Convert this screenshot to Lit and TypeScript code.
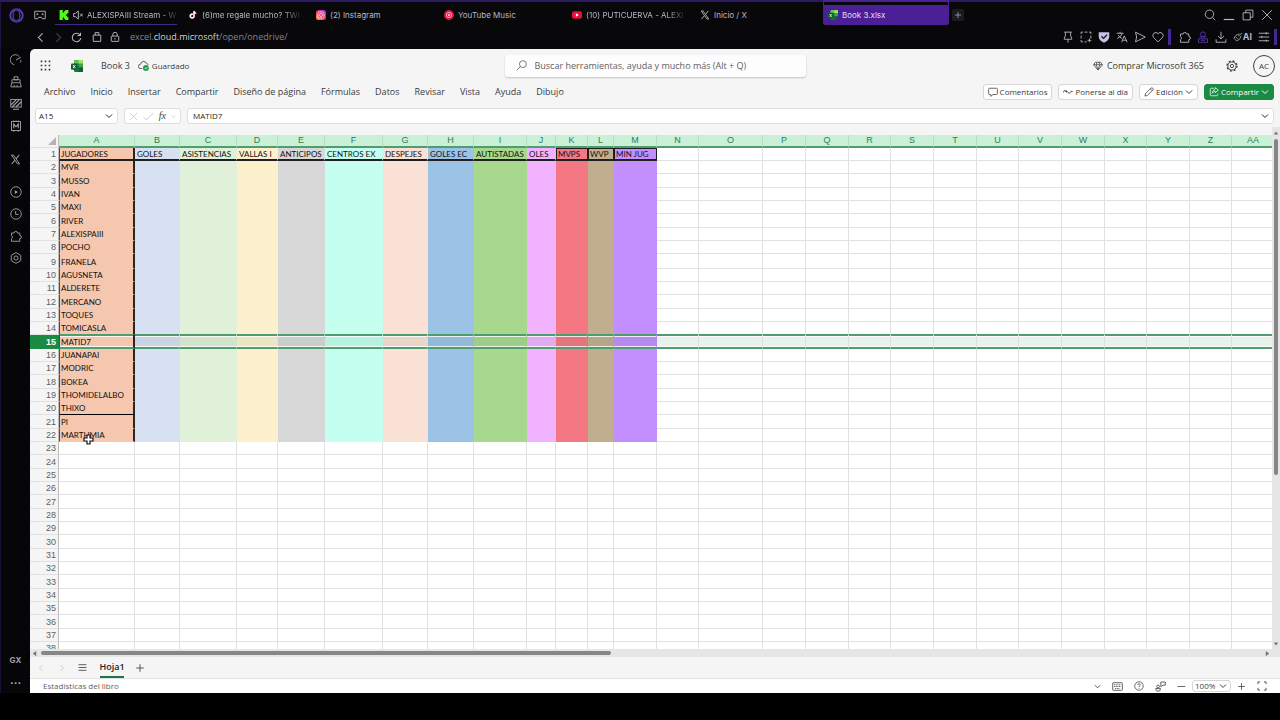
import { LitElement, html, css, svg, nothing } from "lit";
import { customElement, property } from "lit/decorators.js";
import { classMap } from "lit/directives/class-map.js";
import { styleMap } from "lit/directives/style-map.js";

/* Glyphs are drawn on a 16 x 16 canvas with a 1.2 stroke. */
const glyphs: Record<string, unknown> = {
  opera: svg`<g stroke="#5b3bb5" stroke-width="1.3"><circle cx="8" cy="8" r="7"/><ellipse cx="8" cy="8" rx="3.6" ry="5.6"/><path d="M6 2.2Q1.6 3.6 1.8 8.4Q2 12.4 6 13.8M10 2.2Q14.4 3.6 14.2 8.4Q14 12.4 10 13.8"/></g>`,
  workspace: svg`<path d="M1 3h14v10h-4l-1-2H6l-1 2H1z"/><path d="M4.5 6v2M11.500 6v2" stroke-width="2"/>`,
  mute: svg`<path d="M1 5.500v5h3l4.500 4v-13l-4.500 4zM11 5.500l5 5M16 5.500l-5 5" stroke-width="1.500"/>`,
  kick: svg`<path fill="#53fc18" stroke="none" d="M1 0h5v4h2V2h2V0h5v5h-2v2h-2v2h2v2h2v5h-5v-2H8v-2H6v4H1z"/>`,
  tiktok: svg`<path stroke="#25f4ee" stroke-width="2.4" d="M7.4 6.5a3 3 0 1 0 2 3V1.5q.6 3 3.4 3.2"/><path stroke="#fe2c55" stroke-width="2" d="M8.4 7.5a3 3 0 1 0 1.6 3V2.5q.6 3 3.4 3.2"/><path stroke="#fff" stroke-width="2" d="M7.9 7a3 3 0 1 0 1.8 3V2q.6 3 3.4 3.2"/>`,
  instagram: svg`<defs><linearGradient id="ig" x1="0" y1="1" x2="1" y2="0"><stop offset="0" stop-color="#ffb52e"/><stop offset=".45" stop-color="#f5285a"/><stop offset="1" stop-color="#8c2fe0"/></linearGradient></defs><rect width="16" height="16" rx="4" fill="url(#ig)" stroke="none"/><g stroke="#fff"><rect x="3" y="3" width="10" height="10" rx="3"/><circle cx="8" cy="8" r="2.4"/><path d="M11 4.9v.2"/></g>`,
  ytmusic: svg`<circle cx="8" cy="8" r="8" fill="#e6103c" stroke="none"/><circle cx="8" cy="8" r="4.2" stroke="#fff" stroke-width="1"/><path d="M6.8 5.8v4.4L10.4 8z" fill="#fff" stroke="none"/>`,
  youtube: svg`<rect y="2" width="16" height="12" rx="3.4" fill="#e6103c" stroke="none"/><path d="M6.2 5.2v5.6L11 8z" fill="#fff" stroke="none"/>`,
  x: svg`<path d="M2 1.6h3L14 14.4h-3z" stroke-width="1.4"/><path d="M13.5 1.5L8.9 6.8M6.9 9.2L2.4 14.5" stroke-width="1.5"/>`,
  excel: svg`<g stroke="none"><rect x="4" y="0" width="12" height="16" rx="1.6" fill="#107c41"/><path d="M5.5 0H10v5H4V1.5Q4 0 5.5 0z" fill="#5bc74a"/><path d="M10 0h4.5Q16 0 16 1.5V5h-6z" fill="#a6e06a"/><path d="M10 5h6v5h-6z" fill="#3aa648"/><path d="M4 5h6v5H4z" fill="#188044"/><path d="M10 10h6v4.5Q16 16 14.5 16H10z" fill="#185c37"/><rect x="0" y="4.5" width="8.5" height="8.5" rx="1.4" fill="#0e5c30"/></g><path d="M2.6 6.6l3.3 4.4M5.9 6.6l-3.3 4.4" stroke="#fff"/>`,
  plus: svg`<path d="M8 2v12M2 8h12" stroke-width="1.4"/>`,
  minus: svg`<path d="M1 8h14" stroke-width="1.4"/>`,
  search: svg`<circle cx="7.3" cy="7" r="5.6"/><path d="M11.3 11l3.6 4"/>`,
  find: svg`<circle cx="10" cy="6" r="5"/><path d="M6.3 9.7L1 15"/>`,
  minimize: svg`<path d="M1 14h14" stroke-width="1.6"/>`,
  restore: svg`<path d="M1.5 5h9.5v9.5H1.5zM5 5V1.5h9.5V11H11"/>`,
  close: svg`<path d="M1.5 1.5l13 13M14.5 1.5l-13 13"/>`,
  left: svg`<path d="M11 2L5 8l6 6" stroke-width="1.5"/>`,
  right: svg`<path d="M5 2l6 6-6 6" stroke-width="1.5"/>`,
  down: svg`<path d="M2 5l6 6 6-6" stroke-width="2"/>`,
  reload: svg`<path d="M13 4.2A6.2 6.2 0 1 0 14.2 9M13.8 1v4.2H9.5" stroke-width="1.5"/>`,
  bag: svg`<path d="M2 5h12v10H2zM5 5V1h6v4" stroke-width="1.5"/>`,
  lock: svg`<rect x="2" y="6.5" width="12" height="8.5" rx="1" stroke-width="1.5"/><path d="M4.5 6.5V4a3.5 3.5 0 0 1 7 0v2.5M8 9.5v2.5" stroke-width="1.5"/>`,
  pin: svg`<path d="M3 1.5h10M4.5 1.5v5L3 9.5v1.5h10V9.5l-1.5-3v-5M8 11v4.5"/>`,
  snapshot: svg`<path d="M1.5 4V1.5H4M6 1.5h4M12 1.5h2.5V4M14.5 6v4M1.5 6v4M1.5 12v2.5H4M6 14.5h3M12.5 10v5M10 12.5h5"/>`,
  shield: svg`<path d="M1 1.5h14V8q-.5 5-7 7.5Q1.5 13 1 8z" fill="#c9c0e6" stroke="none"/><path d="M4.5 7l3 3 4.5-5" stroke="#15121f" stroke-width="1.6"/>`,
  translate: svg`<path d="M1 3h9M5.5 1v2M8.5 3Q7 8 1.5 10M3 5.5q2 3 5 4.5M7.5 15L11 6.5l3.8 8.5M8.8 12.3h5"/>`,
  send: svg`<path d="M2 1.5L15 8 2 14.5 3.5 8z"/>`,
  heart: svg`<path d="M8 14.5L2 8.5a3.8 3.8 0 0 1 6-5 3.8 3.8 0 0 1 6 5z"/>`,
  puzzle: svg`<path d="M2 4h3.5a2.2 2.2 0 0 1 4.4 0H13v3.2a2.2 2.2 0 0 1 0 4.4V15H2v-3.5a2.2 2.2 0 0 0 0-4z"/>`,
  person: svg`<g stroke="#5b34b8"><circle cx="8" cy="4.5" r="3.3"/><path d="M3.5 8h9M2 10.5h12V15H2zM5.5 12.5h5"/></g>`,
  download: svg`<path d="M8 1v9.5M4 6.8l4 3.9 4-3.9M1.5 11v4h13v-4"/>`,
  brush: svg`<path d="M14.5 1.5L8 7M10.5 3L5 5 1.5 10 6 14.5 11 11l2-5M4 7.5L8.5 12"/>`,
  sliders: svg`<path d="M1 3h14M1 8h14M1 13h14M11 1.5v3M5 6.5v3M11 11.5v3"/>`,
  gauge: svg`<path d="M12.5 3.6A6.8 6.8 0 1 0 5.5 14.3M8 8l6.5-3.5M14.7 8a6.6 6.6 0 0 1-1 3.5"/>`,
  cleaner: svg`<path d="M5.5 1h5v4h-5zM2.5 5h11v4h-11zM2.5 9L1 14.5h14L13.5 9M5.5 14.5V12M9.5 14.5V12"/>`,
  wallpaper: svg`<rect x="1" y="2" width="14" height="10"/><path d="M1.5 9L8 2.5M3 12L12 2.5M8 12l7-7M4 15h8" stroke-width="1.5"/>`,
  mods: svg`<rect x="2" y="2" width="12" height="12"/><path d="M5 11V5.5l3 3.5 3-3.5V11M5 .5v1M8 .5v1M11 .5v1M5 15v1M11 15v1" stroke-width="1.5"/>`,
  play: svg`<circle cx="8" cy="8" r="7"/><path d="M6.5 5.5v5L10.5 8z" fill="currentColor" stroke="none"/>`,
  clock: svg`<circle cx="8" cy="8" r="7"/><path d="M7.5 4v4.5h4"/>`,
  settings: svg`<path d="M8 .8L14.3 4.4v7.2L8 15.2 1.7 11.6V4.4z"/><circle cx="8" cy="8" r="2.8"/>`,
  gear: svg`<circle cx="8" cy="8" r="2.2"/><circle cx="8" cy="8" r="5.4"/><circle cx="8" cy="8" r="6.7" stroke-width="1.7" stroke-dasharray="2.6 2.66"/>`,
  dots: svg`<path d="M1.5 9h2.5M7 9h2.5M12.5 9H15" stroke-width="2.5"/>`,
  waffle: svg`<path d="M1 2h2.4M6.8 2h2.4M12.6 2H15M1 8h2.4M6.8 8h2.4M12.6 8H15M1 14h2.4M6.8 14h2.4M12.6 14H15" stroke-width="2.4"/>`,
  cloud: svg`<path d="M6 12.5H4a3.2 3.2 0 0 1-.3-6.4A4.6 4.6 0 0 1 12.5 5a3 3 0 0 1 2.3 2"/><circle cx="11.5" cy="11.5" r="4.3" fill="#1f9d4d" stroke="none"/><path d="M9.5 11.5l1.5 1.5 2.5-2.8" stroke="#fff"/>`,
  diamond: svg`<path d="M4 2h8l3.2 4L8 14.5.8 6zM.8 6h14.4M5 6l3 8 3-8M5 6l1.5-4M11 6L9.5 2"/>`,
  comment: svg`<path d="M2.5 2h11Q15 2 15 3.5v7q0 1.5-1.5 1.5H8l-3.5 3V12h-2Q1 12 1 10.5v-7Q1 2 2.5 2z"/>`,
  catchup: svg`<path d="M0 9l2.5-3.5L6 7.5M7 7.5l3 3L13 7h2.5" stroke-width="1.5"/><circle cx="5.5" cy="7" r="1" fill="currentColor"/>`,
  pencil: svg`<path d="M1.5 14.5l1-4L11.5 1.5q1.5-.8 2.5.5t.5 2.5L5.5 13.5zM10 3l3 3"/>`,
  share: svg`<path d="M8 2H4Q2 2 2 4v8q0 2 2 2h8q2 0 2-2v-1.5M10 1l5 4-5 4V7Q7 7 5 10q.5-5 5-6.5z"/>`,
  check: svg`<path d="M1 9l4 4L15 3"/>`,
  lines: svg`<path d="M1 3h14M1 8h14M1 13h14" stroke-width="1.5"/>`,
  keyboard: svg`<rect x="1" y="2.5" width="14" height="11" rx="1"/><path d="M3 5.5h10M3 8h10M4.5 11h7" stroke-dasharray="1.6 .8"/>`,
  help: svg`<circle cx="8" cy="8" r="6.8"/><path d="M6 6.3a2 2 0 1 1 2.8 1.8Q8 8.5 8 9.8M8 11.3v.9"/>`,
  feedback: svg`<circle cx="4.5" cy="8" r="2"/><path d="M1 11h7q0 4-3.5 4T1 11zM8.5 1.5H15V6h-3.5l-3 2.5z"/>`,
  expand: svg`<path d="M1.5 5V1.5H5M11 1.5h3.5V5M14.5 11v3.5H11M5 14.5H1.5V11" stroke-width="1.4"/>`,
  triLeft: svg`<path d="M12 2v12L4 8z" fill="currentColor" stroke="none"/>`,
  triRight: svg`<path d="M4 2v12l8-6z" fill="currentColor" stroke="none"/>`,
  triUp: svg`<path d="M2 12h12L8 4z" fill="currentColor" stroke="none"/>`,
  triDown: svg`<path d="M2 4h12l-6 8z" fill="currentColor" stroke="none"/>`,
};

const icon = (name: string, size = 12) => html`<svg
  class="icon" width=${size} height=${size} viewBox="0 0 16 16" fill="none"
  stroke="currentColor" stroke-width="1.2" aria-hidden="true">${glyphs[name]}</svg>`;

const base = css`
  :host, * { box-sizing: border-box; }
  .icon { display: block; flex: none; }
  button { font: inherit; color: inherit; background: none; border: 0; padding: 0; margin: 0;
    display: flex; align-items: center; justify-content: center; flex: none; white-space: nowrap; }
  a { color: inherit; text-decoration: none; }
`;

@customElement("browser-bar")
class BrowserBar extends LitElement {
  static styles = [base, css`
    :host { display: block; height: 49px; background: #08080a; border-top: 2px solid #2c1b62;
      border-left: 1px solid #1d1440; color: #b9b7c0; font: 8px/14px Inter, sans-serif; }
    .tabs { display: flex; height: 26px; align-items: center; }
    .logo { width: 31px; }
    .work { width: 16px; margin-right: 7px; }
    .tab { display: flex; align-items: center; gap: 4px; width: 128px; height: 20px; padding: 0 5px; }
    .text { white-space: nowrap; }
    .fade .text { mask-image: linear-gradient(90deg, #000 82%, transparent 104%); }
    .muted { border-bottom: 1px solid #3c2b86; width: 122px; margin-right: 6px; padding: 0 0 0 4px; }
    .active { background: #4b1f95; width: 126px; border-radius: 2px; color: #e6def5;
      box-shadow: 0 -4px 0 -1px #08080a, 0 -6px 0 #4b1f95; }
    .new { background: #1c1b20; width: 12px; height: 12px; border-radius: 2px; margin-left: 3px; }
    .window { margin-left: auto; display: flex; gap: 7px; padding-right: 7px; }
    .bar { display: flex; height: 18px; align-items: center; }
    .nav { display: flex; gap: 6px; padding-left: 33px; width: 129px; }
    .nav button { width: 12px; }
    .nav .gap { margin-left: 3px; }
    .dim { color: #4b4956; }
    .url { color: #85819a; font: 9px/14px "Open Sans", sans-serif; }
    .url b { font-weight: 400; color: #d2cfdb; }
    .tools { margin-left: auto; display: flex; align-items: center; gap: 6px; padding-right: 3px; }
    .mark { width: 3px; height: 16px; background: #43289a; margin-left: -2px; }
    .mark.mid { margin-right: 2px; }
    .ai { font-weight: 700; font-size: 9px; }
  `];
  tabs = [
    ["kick", "ALEXISPAIII Stream - W"], ["tiktok", "(6)me regale mucho? TWI"], ["instagram", "(2) Instagram"],
    ["ytmusic", "YouTube Music"], ["youtube", "(10) PUTICUERVA - ALEXI"], ["x", "Inicio / X"], ["excel", "Book 3.xlsx"],
  ];
  render() {
    return html`
      <div class="tabs" role="tablist">
        <button class="logo" aria-label="Menú">${icon("opera", 15)}</button>
        <button class="work" aria-label="Espacio">${icon("workspace", 12)}</button>
        ${this.tabs.map(([ic, t], i) => html`<a href="#" role="tab" class=${classMap({ tab: true, muted: i === 0, active: i === 6, fade: t.length > 20 })}>
          ${icon(ic, 10)}${i === 0 ? icon("mute", 10) : nothing}<span class="text">${t}</span></a>`)}
        <button class="new" aria-label="Nueva pestaña">${icon("plus", 8)}</button>
        <div class="window">${["search", "minimize", "restore", "close"].map((n) => html`<button aria-label=${n}>${icon(n, 12)}</button>`)}</div>
      </div>
      <div class="bar">
        <div class="nav">
          <button aria-label="Atrás">${icon("left", 11)}</button>
          <button class="dim" aria-label="Adelante">${icon("right", 11)}</button>
          <button aria-label="Recargar">${icon("reload", 11)}</button>
          <button class="gap" aria-label="Ofertas">${icon("bag", 10)}</button>
          <button aria-label="Seguridad">${icon("lock", 10)}</button>
        </div>
        <a class="url" href="#">excel.<b>cloud.microsoft</b>/open/onedrive/</a>
        <div class="tools">
          ${["pin", "snapshot", "shield", "translate", "send", "heart"].map((n) => html`<button aria-label=${n}>${icon(n, 12)}</button>`)}
          <span class="mark mid"></span>
          ${["puzzle", "person", "download"].map((n) => html`<button aria-label=${n}>${icon(n, 12)}</button>`)}
          <button class="ai" aria-label="AI">${icon("brush", 10)}AI</button>
          <button aria-label="Configuración">${icon("sliders", 12)}</button>
          <span class="mark"></span>
        </div>
      </div>`;
  }
}

@customElement("side-rail")
class SideRail extends LitElement {
  static styles = [base, css`
    :host { display: flex; flex-direction: column; width: 30px; flex: none; align-items: center; color: #a3a1aa;
      background: #060608; border-left: 1px solid #171033; }
    button { width: 22px; height: 22px; }
    .space { margin-top: 11px; }
    .end { margin-top: auto; font: 700 8px/12px Inter, sans-serif; }
  `];
  render() {
    return html`
      ${["gauge", "cleaner", "wallpaper", "mods"].map((n) => html`<button aria-label=${n}>${icon(n, 12)}</button>`)}
      <button class="space" aria-label="X">${icon("x", 11)}</button>
      <button class="space" aria-label="Reproductor">${icon("play", 12)}</button>
      ${["clock", "puzzle", "settings"].map((n) => html`<button aria-label=${n}>${icon(n, 12)}</button>`)}
      <button class="end">GX</button>
      <button aria-label="Más">${icon("dots", 11)}</button>`;
  }
}

@customElement("excel-header")
class ExcelHeader extends LitElement {
  static styles = [base, css`
    :host { display: block; background: #f5f5f5; color: #3b3a39; font: 9px/14px "Open Sans", sans-serif;
      border-radius: 5px 0 0 0; }
    .title { display: grid; grid-template-columns: 1fr 301px 1fr; height: 33px; align-items: center; }
    .doc { display: flex; align-items: center; padding-left: 10px; }
    .apps { margin-right: 20px; }
    .name { margin: 0 8px 0 18px; }
    .saved { font-size: 8px; gap: 3px; }
    .search { display: flex; align-items: center; gap: 8px; height: 22px; padding: 0 11px; background: #fdfdfd;
      border-radius: 3px; box-shadow: 0 1px 2px #0003; color: #616161; }
    input { font: inherit; color: inherit; border: 0; outline: 0; background: none; padding: 0; min-width: 0; flex: 1; }
    .search input::placeholder { color: #616161; opacity: 1; }
    .account { display: flex; align-items: center; justify-content: flex-end; padding-right: 5px; }
    .buy { gap: 4px; margin-right: 22px; }
    .avatar { width: 22px; height: 22px; border: 1px solid #424242; border-radius: 50%; margin-left: 15px; font-size: 8px; }
    .menu { display: flex; align-items: center; height: 20px; padding: 0 6px 0 14px; }
    nav { display: flex; gap: 15px; }
    .actions { margin-left: auto; display: flex; gap: 6px; font-size: 8px; }
    .action { height: 16px; padding: 0 4px; gap: 2px; background: #fff; border: 1px solid #d6d6d6; border-radius: 3px; }
    .primary { background: #1b8a43; border-color: #1b8a43; color: #fff; }
    .formula { display: flex; gap: 6px; padding: 6px 6px 3px 5px; color: #242424; }
    .box { display: flex; align-items: center; height: 16px; background: #fff; border: 1px solid #dedede; border-radius: 3px; font-size: 8px; padding: 0 4px; }
    .ref { width: 83px; padding-left: 3px; }
    .fx { width: 57px; justify-content: space-between; color: #bdbdbd; }
    .fx i { color: #424242; font-family: "Liberation Serif", serif; font-size: 10px; }
    .value { flex: 1; padding-left: 5px; }
  `];
  render() {
    return html`
      <div class="title">
        <div class="doc">
          <button class="apps" aria-label="Aplicaciones">${icon("waffle", 11)}</button>
          ${icon("excel", 12)}<span class="name">Book 3</span>
          <button class="saved">${icon("cloud", 11)}Guardado</button>
        </div>
        <label class="search">${icon("find", 11)}<input aria-label="Buscar" placeholder="Buscar herramientas, ayuda y mucho más (Alt + Q)"></label>
        <div class="account">
          <button class="buy">${icon("diamond", 10)}Comprar Microsoft 365</button>
          <button aria-label="Configuración">${icon("gear", 12)}</button>
          <button class="avatar">AC</button>
        </div>
      </div>
      <div class="menu">
        <nav>${["Archivo", "Inicio", "Insertar", "Compartir", "Diseño de página", "Fórmulas", "Datos", "Revisar", "Vista", "Ayuda", "Dibujo"].map((m) => html`<button>${m}</button>`)}</nav>
        <div class="actions">
          <button class="action">${icon("comment", 10)}Comentarios</button>
          <button class="action">${icon("catchup", 10)}Ponerse al día</button>
          <button class="action">${icon("pencil", 10)}Edición${icon("down", 8)}</button>
          <button class="action primary">${icon("share", 10)}Compartir${icon("down", 8)}</button>
        </div>
      </div>
      <div class="formula">
        <div class="box ref"><input aria-label="Cuadro de nombres" .value=${"A15"}>${icon("down", 8)}</div>
        <div class="box fx">${icon("close", 9)}${icon("check", 11)}<i>fx</i>${icon("down", 5)}</div>
        <div class="box value"><input aria-label="Barra de fórmulas" .value=${"MATID7"}>${icon("down", 8)}</div>
      </div>`;
  }
}

interface Column { id: string; width: number; title?: string; fill?: string; boxed?: boolean }

const columns: Column[] = [
  { id: "A", width: 76, title: "JUGADORES", fill: "#f4c7ae" },
  { id: "B", width: 45, title: "GOLES", fill: "#d8e1f1" },
  { id: "C", width: 57, title: "ASISTENCIAS", fill: "#e1f1d9" },
  { id: "D", width: 41, title: "VALLAS I", fill: "#fdf1cd" },
  { id: "E", width: 47, title: "ANTICIPOS", fill: "#d8d8d8" },
  { id: "F", width: 58, title: "CENTROS EX", fill: "#c5fff0" },
  { id: "G", width: 45, title: "DESPEJES", fill: "#fae1d5" },
  { id: "H", width: 46, title: "GOLES EC", fill: "#9cc3e6" },
  { id: "I", width: 53, title: "AUTISTADAS", fill: "#a8d88e" },
  { id: "J", width: 29, title: "OLES", fill: "#f1b3ff" },
  { id: "K", width: 32, title: "MVPS", fill: "#f47784", boxed: true },
  { id: "L", width: 26, title: "WVP", fill: "#c1ae8f", boxed: true },
  { id: "M", width: 43, title: "MIN JUG", fill: "#c38fff", boxed: true },
  { id: "N", width: 42 }, { id: "O", width: 64 }, { id: "P", width: 43 }, { id: "Q", width: 43 },
  { id: "R", width: 42 }, { id: "S", width: 43 }, { id: "T", width: 43 }, { id: "U", width: 42 },
  { id: "V", width: 43 }, { id: "W", width: 43 }, { id: "X", width: 42 }, { id: "Y", width: 43 },
  { id: "Z", width: 42 }, { id: "AA", width: 43 },
];

const players = ["MVR", "MUSSO", "IVAN", "MAXI", "RIVER", "ALEXISPAIII", "POCHO", "FRANELA", "AGUSNETA", "ALDERETE",
  "MERCANO", "TOQUES", "TOMICASLA", "MATID7", "JUANAPAI", "MODRIC", "BOKEA", "THOMIDELALBO", "THIXO", "PI", "MARTHMIA"];

@customElement("sheet-grid")
class SheetGrid extends LitElement {
  @property({ type: Number }) selected = 15;
  static styles = [base, css`
    :host { display: grid; grid-template-columns: minmax(0, 1fr) 8px; grid-template-rows: minmax(0, 1fr) 8px;
      flex: 1; min-height: 0; background: #f5f5f5; }
    .pane { position: relative; overflow: hidden; background: #fff; margin-top: 8px; }
    table { border-collapse: separate; border-spacing: 0; table-layout: fixed; width: 0; }
    th, td { padding: 0; overflow: hidden; white-space: nowrap; }
    thead th { height: 13px; background: #caf0d8; color: #2f7d52; font: 9px/11px "Liberation Sans", sans-serif;
      border-right: 1px solid #b4dfc4; border-bottom: 2px solid #4f9d6e; }
    thead .corner { background: #f5f5f5; border-bottom: 1px solid #e1e1e1; border-right: 1px solid #bdbdbd; color: #b5b5b5; }
    .corner .icon { margin-left: auto; margin-right: 2px; }
    tbody tr { height: 13px; }
    tbody tr:nth-child(3n) { height: 14px; }
    tbody tr.tall { height: 15px; }
    tbody th { background: #f5f5f5; color: #616161; text-align: right; padding-right: 2px; vertical-align: bottom;
      font: 9px/11px "Liberation Sans", sans-serif; border-right: 1px solid #bdbdbd; border-bottom: 1px solid #e1e1e1; }
    td { border-right: 1px solid #e1e1e1; border-bottom: 1px solid #e1e1e1; vertical-align: bottom;
      font: 8px/11px Lato, sans-serif; color: #111; padding-left: 1px; }
    td.fill { border-color: transparent; }
    td.first { border-left: 1px solid #5a4a42; border-right: 2px solid #2a2422; }
    .titles td.fill { border-bottom: 2px solid #1f1f1f; padding-left: 2px; line-height: 10px; }
    .titles td.first { padding-left: 1px; }
    .titles td.boxed { border-right: 1px solid #1f1f1f; box-shadow: inset 1px 0 #1f1f1f, inset 0 1px #1f1f1f; }
    td.ruled { border-bottom: 1px solid #000; }
    .selected th { background: #1b8a43; color: #fff; font-weight: 700; border-color: #1b8a43; }
    tr:has(+ .selected) td { border-bottom-color: #4f9d6e; }
    .selected td { border-bottom: 2px solid #4f9d6e; box-shadow: inset 0 1px #4f9d6e, inset 0 2px #fffc, inset 0 -1px #fffc;
      background: #e8f2ec; line-height: 10px; }
    .scroll { background: #e6e6e6; display: flex; align-items: center; color: #757575; }
    .vertical { flex-direction: column; gap: 3px; padding: 3px 0 2px; }
    .vertical .thumb { width: 4px; flex: 0 0 65%; border-radius: 2px; background: #868686; }
    .vertical .rest { flex: 1; }
    .horizontal { gap: 3px; padding: 0 1px; }
    .horizontal .thumb { height: 4px; width: 46%; border-radius: 2px; background: #868686; margin-right: auto; }
    .end { background: #e6e6e6; }
    .pointer { position: absolute; left: 53px; top: 299px; }
  `];
  row(n: number) {
    return html`<tr class=${classMap({ titles: n === 1, tall: n === 9, selected: n === this.selected })}>
      <th scope="row">${n}</th>
      ${columns.map((c, i) => {
        const filled = !!c.fill && n <= 22;
        const tint = n === this.selected && i > 0 ? `color-mix(in srgb, ${c.fill} 92%, #1b5a33)` : c.fill;
        return html`<td class=${classMap({ fill: filled, first: filled && i === 0, boxed: !!c.boxed, ruled: n === 20 && i === 0 })}
          style=${filled ? styleMap({ backgroundColor: tint }) : nothing}>${n === 1 ? c.title : i === 0 ? players[n - 2] : nothing}</td>`;
      })}
    </tr>`;
  }
  render() {
    return html`
      <div class="pane">
        <table>
          <colgroup><col style="width:29px">${columns.map((c) => html`<col style=${styleMap({ width: `${c.width}px` })}>`)}</colgroup>
          <thead><tr><th class="corner"><svg class="icon" width="8" height="8" viewBox="0 0 8 8"><path d="M8 0v8H0z" fill="#b5b5b5"/></svg></th>
            ${columns.map((c) => html`<th scope="col">${c.id}</th>`)}</tr></thead>
          <tbody>${Array.from({ length: 38 }, (_, i) => this.row(i + 1))}</tbody>
        </table>
        <svg class="pointer" width="11" height="11" viewBox="0 0 11 11" aria-hidden="true"><path d="M4 1h3v3h3v3H7v3H4V7H1V4h3z" fill="#fff" stroke="#111" stroke-width="1.2"/></svg>
      </div>
      <div class="scroll vertical">${icon("triUp", 6)}<span class="thumb"></span><span class="rest"></span>${icon("triDown", 6)}</div>
      <div class="scroll horizontal">${icon("triLeft", 7)}<span class="thumb"></span>${icon("triRight", 7)}</div>
      <div class="end"></div>`;
  }
}

@customElement("sheet-footer")
class SheetFooter extends LitElement {
  static styles = [base, css`
    :host { display: block; font: 9px/14px "Open Sans", sans-serif; color: #424242; }
    .sheets { display: flex; align-items: center; height: 22px; padding-left: 5px; gap: 10px; background: #f5f5f5; border-bottom: 1px solid #e3e3e3; }
    .sheets button { width: 11px; height: 21px; }
    .sheets .dim { color: #c2c2c2; }
    .sheets .tab { width: 24px; font-weight: 600; color: #242424; border-bottom: 2px solid #217346; margin: 0 0 0 2px; }
    .status { display: flex; align-items: center; height: 14px; background: #fff; padding: 0 13px; font-size: 8px; color: #616161; }
    .tools { margin-left: auto; display: flex; align-items: center; gap: 11px; color: #424242; }
    select { font: inherit; line-height: 10px; height: 12px; width: 39px; border: 1px solid #d6d6d6; border-radius: 3px; appearance: none;
      background: none; color: inherit; padding: 0 2px; }
    .zoom { display: grid; align-items: center; margin: 0 -5px; }
    .zoom > * { grid-area: 1 / 1; }
    .zoom .icon { justify-self: end; margin-right: 4px; }
  `];
  render() {
    return html`
      <div class="sheets">
        <button class="dim" aria-label="Anterior">${icon("left", 8)}</button>
        <button class="dim" aria-label="Siguiente">${icon("right", 8)}</button>
        <button aria-label="Todas las hojas">${icon("lines", 9)}</button>
        <button class="tab">Hoja1</button>
        <button aria-label="Nueva hoja">${icon("plus", 10)}</button>
      </div>
      <div class="status">Estadísticas del libro
        <div class="tools">
          <button aria-label="Opciones">${icon("down", 7)}</button>
          <button aria-label="Teclado">${icon("keyboard", 11)}</button>
          <button aria-label="Ayuda">${icon("help", 10)}</button>
          <button aria-label="Comentarios">${icon("feedback", 11)}</button>
          <button aria-label="Reducir">${icon("minus", 9)}</button>
          <label class="zoom"><select aria-label="Zoom"><option>100%</option></select>${icon("down", 8)}</label>
          <button aria-label="Ampliar">${icon("plus", 9)}</button>
          <button aria-label="Ajustar">${icon("expand", 10)}</button>
        </div>
      </div>`;
  }
}

@customElement("app-root")
class AppRoot extends LitElement {
  static styles = css`
    :host { display: flex; flex-direction: column; height: 100vh; box-sizing: border-box; padding-bottom: 27px; background: #000; overflow: hidden; }
    .body { display: flex; flex: 1; min-height: 0; background: #060608; }
    main { display: flex; flex-direction: column; flex: 1; min-width: 0; }
  `;
  render() {
    return html`<browser-bar></browser-bar>
      <div class="body"><side-rail></side-rail>
        <main><excel-header></excel-header><sheet-grid></sheet-grid><sheet-footer></sheet-footer></main>
      </div>`;
  }
}
